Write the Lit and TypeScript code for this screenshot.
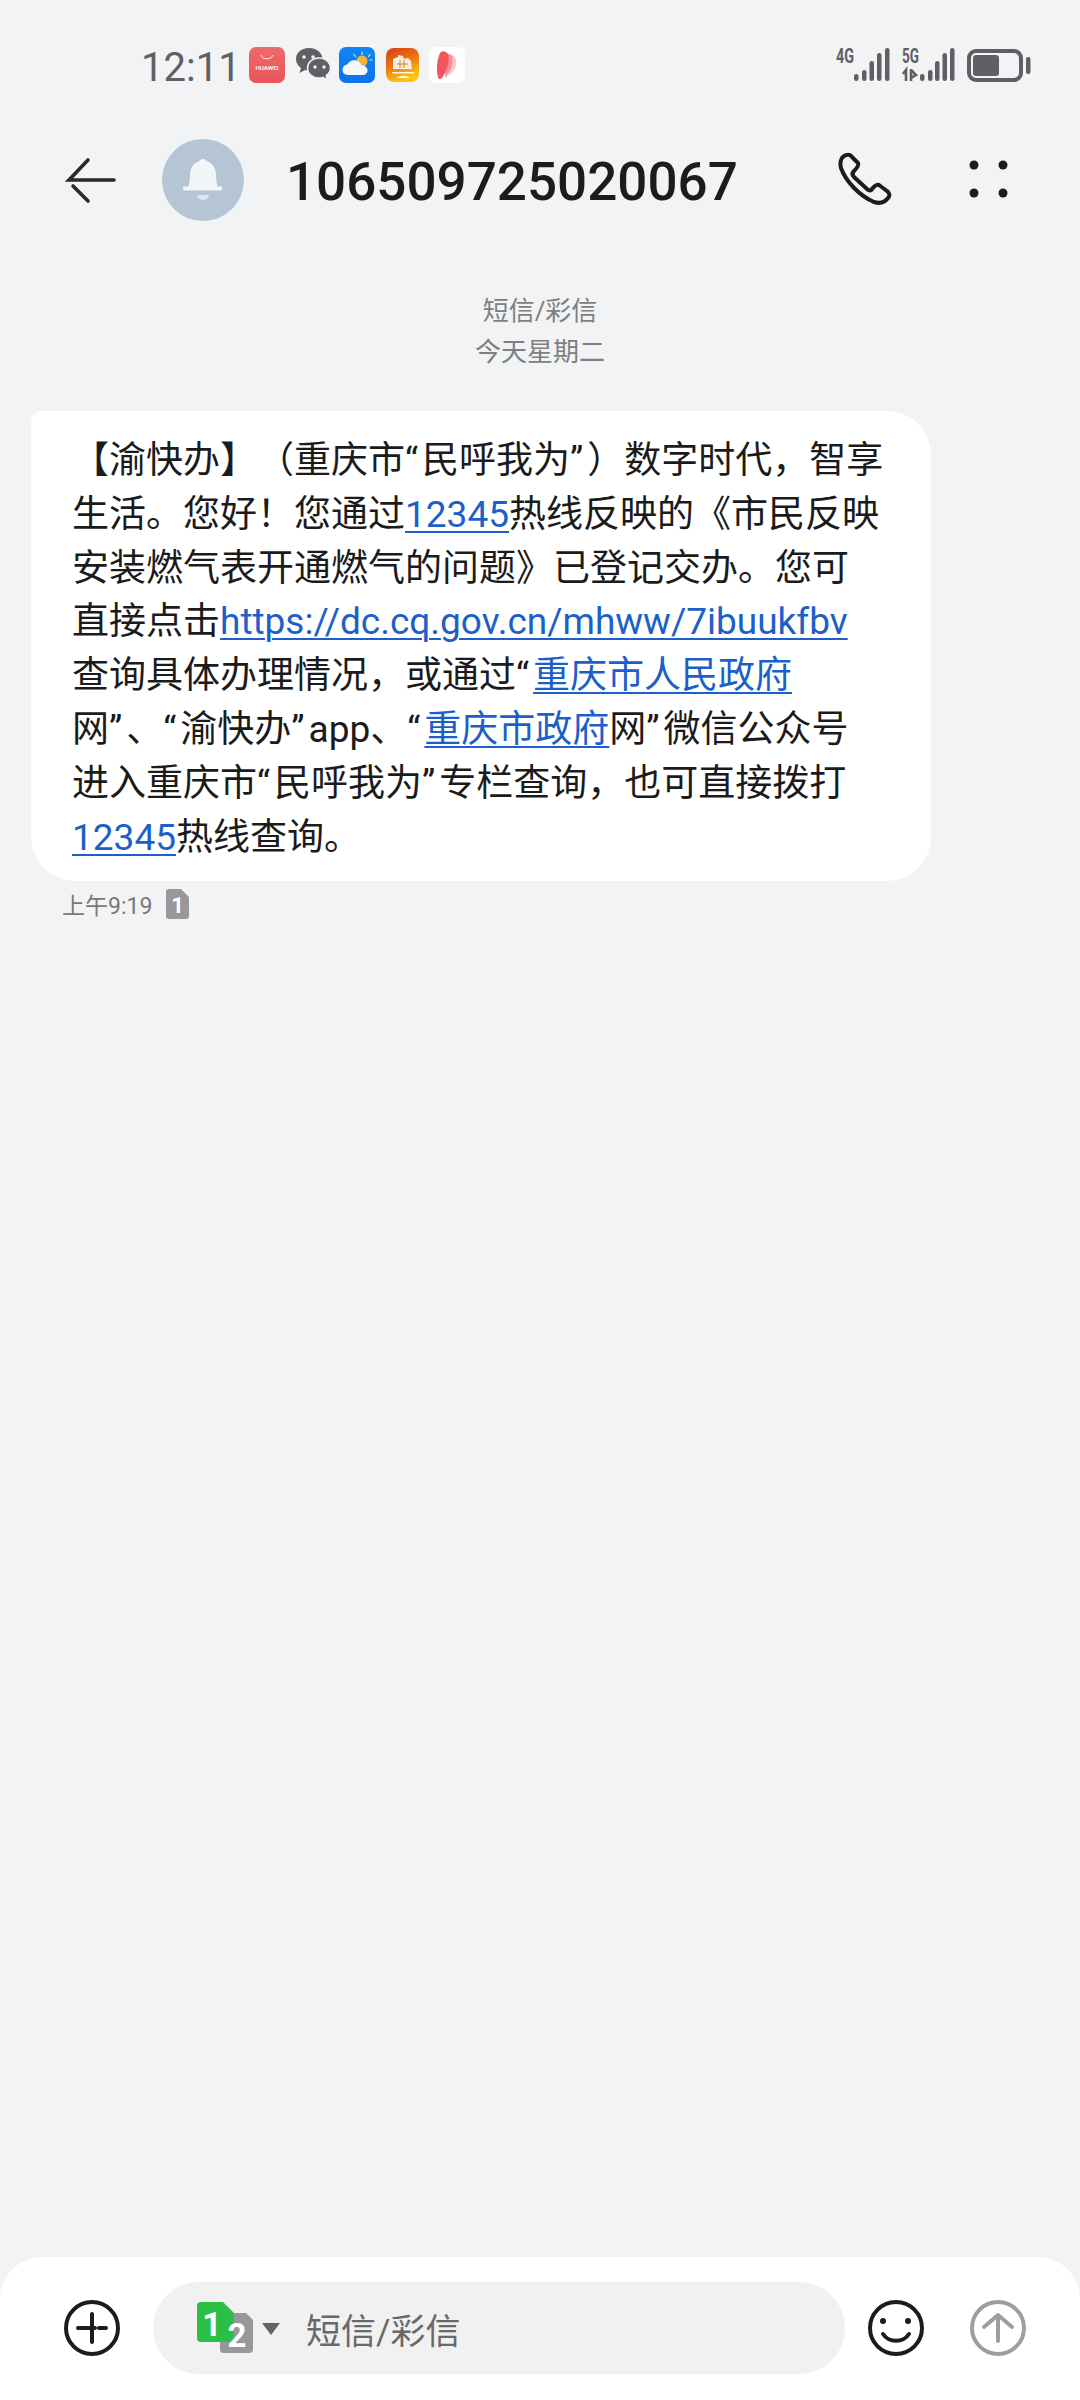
import { LitElement, css, html, svg } from "lit";
import { customElement } from "lit/decorators.js";

const bars = (xs: number[]) => {
  const tops = [74, 70, 61, 53, 48];
  return xs.map(
    (x, i) => svg`<rect x=${x} y=${tops[i]} width="4.5" height=${81 - tops[i]} rx="2.2" fill="#5f6063"></rect>`,
  );
};

@customElement("app-root")
export class AppRoot extends LitElement {
  static styles = css`
    :host {
      display: block;
      width: 1080px;
      height: 2400px;
      background: #f1f3f5;
      font-family: Roboto, "Noto Sans CJK SC", sans-serif;
      overflow: hidden;
    }
    svg {
      display: block;
      flex: none;
    }
    .page {
      height: 2400px;
      display: flex;
      flex-direction: column;
    }
    .status {
      height: 134px;
      display: flex;
      align-items: center;
      padding-left: 141px;
    }
    .time {
      width: 108px;
      font-size: 40px;
      color: #5f6063;
    }
    .apps {
      flex: none;
    }
    .signal {
      margin-left: 357px;
    }
    .header {
      height: 92px;
      display: flex;
      align-items: center;
      padding-left: 62px;
    }
    .avatar {
      margin-left: 40px;
    }
    .title {
      margin-left: 42px;
      width: 544px;
      padding-top: 4px;
      font-size: 53px;
      font-weight: 500;
      color: #1c1c1e;
      line-height: 88px;
    }
    .dots {
      margin-left: 61px;
    }
    .thread {
      flex: 1;
    }
    .notice {
      margin-top: 65px;
      text-align: center;
      font-size: 26px;
      line-height: 41px;
      color: #7d7f82;
    }
    .bubble {
      margin: 38px 0 0 31px;
      width: 900px;
      box-sizing: border-box;
      padding: 23px 0 17px 41px;
      background: #fff;
      border-radius: 10px 44px 44px 44px;
      font-size: 37px;
      line-height: 53.8px;
      color: #1b1b1b;
      white-space: nowrap;
      text-spacing-trim: space-all;
    }
    .bubble a {
      color: #1d5fc9;
      text-decoration: underline;
      text-decoration-thickness: 2px;
      text-underline-offset: 4px;
    }
    .q {
      letter-spacing: 4px;
    }
    .meta {
      margin: 8px 0 0 62px;
      display: flex;
      align-items: center;
      gap: 14px;
      height: 30px;
      font-size: 23px;
      color: #77797c;
    }
    .composer {
      height: 143px;
      box-sizing: border-box;
      padding-top: 25px;
      background: #fff;
      border-radius: 42px 42px 0 0;
      display: flex;
      align-items: flex-start;
    }
    .icon {
      margin-top: 16px;
    }
    .plus {
      margin-left: 62px;
    }
    .pill {
      margin-left: 31px;
      width: 692px;
      height: 92px;
      border-radius: 46px;
      background: #f1f1f1;
      display: flex;
      align-items: center;
      padding-left: 44px;
      box-sizing: border-box;
    }
    .placeholder {
      margin-left: 9px;
      font-size: 35px;
      color: #68696b;
    }
    .smile {
      margin-left: 21px;
    }
    .send {
      margin-left: 42px;
    }
  `;

  private statusIcons() {
    return html`<svg class="apps" width="230" height="40" viewBox="0 2 230 40">
      <defs>
        <linearGradient id="hw" x1="0" y1="0" x2="0" y2="1">
          <stop offset="0" stop-color="#ee6a6c"></stop>
          <stop offset="1" stop-color="#e9545a"></stop>
        </linearGradient>
        <linearGradient id="wx" x1="0" y1="0" x2="0" y2="1">
          <stop offset="0" stop-color="#0f86f5"></stop>
          <stop offset="1" stop-color="#0a73ea"></stop>
        </linearGradient>
        <linearGradient id="org" x1="0" y1="0" x2="0.4" y2="1">
          <stop offset="0" stop-color="#d63b1a"></stop>
          <stop offset="0.55" stop-color="#ec7a14"></stop>
          <stop offset="1" stop-color="#f8c80f"></stop>
        </linearGradient>
      </defs>
      <!-- huawei store -->
      <rect x="0" y="2" width="36" height="36" rx="7" fill="url(#hw)"></rect>
      <path d="M12 10c1 5 11 5 12 0" fill="none" stroke="#fff" stroke-width="1" opacity="0.85"></path>
      <text x="18" y="25" text-anchor="middle" font-family="Roboto" font-weight="700" font-size="6.2" fill="#fff" opacity="0.9">HUAWEI</text>
      <!-- wechat -->
      <path d="M60 3c-8 0-13 5-13 11 0 4 2 7 5 9l-1.500 5 5.500-3c1.500.4 3 .6 4.500.6 7 0 13-5 13-11.500S67 3 60 3z" fill="#5f6063"></path>
      <path d="M70 13c-7 0-11.500 4.500-11.500 10S63 33 70 33c1.300 0 2.500-.2 3.800-.6l4.700 2.800-1.200-4.500c2.500-1.900 4.200-4.600 4.200-7.700 0-5.500-5-10-10.500-10z" fill="#5f6063" stroke="#f1f3f5" stroke-width="1.500"></path>
      <circle cx="55" cy="12" r="1.800" fill="#f1f3f5"></circle>
      <circle cx="64" cy="12" r="1.800" fill="#f1f3f5"></circle>
      <circle cx="66" cy="22" r="1.700" fill="#f1f3f5"></circle>
      <circle cx="75" cy="22" r="1.700" fill="#f1f3f5"></circle>
      <!-- weather -->
      <rect x="90" y="2" width="36" height="36" rx="7" fill="url(#wx)"></rect>
      <circle cx="113" cy="16" r="5.500" fill="#f5b53a"></circle>
      <path d="M113 7v2.500M105 9.500l1.500 2M121 9.500l-1.500 2M123 15h-2" stroke="#e8eef6" stroke-width="1.200" stroke-linecap="round"></path>
      <path d="M99 30c-3.500 0-5.500-2.400-5.500-5.200 0-2.800 2-5 4.800-5.200 1.300-2.800 4-4.400 7-4.400 3.400 0 6.300 2.200 7.200 5.400 3.200-.2 6 2 6 4.800 0 2.800-2.300 4.600-5 4.600z" fill="#f3f8fd"></path>
      <!-- city app -->
      <rect x="137" y="3" width="33" height="34" rx="8" fill="url(#org)"></rect>
      <path d="M144 24v-10l5-2v-2l5 1 1 3 4-1 3 3 1 8zM143 27h22v1.500h-22zM147 33c4-3 10-3 14 0" fill="#fff" fill-opacity="0.88" stroke="none"></path>
      <path d="M151 15v8M155 15v8M148 19h11" stroke="#e8741c" stroke-width="1"></path>
      <!-- notes -->
      <rect x="180" y="2" width="36" height="36" rx="7" fill="#fff"></rect>
      <path d="M202 10l4 2c3 6 1 14-7 19z" fill="#fcc6c8"></path>
      <path d="M197 8l6 2c2 7-1 17-7 23z" fill="#f98f92"></path>
      <path d="M191 8c2-3 6-2 8 1 2 7-1 17-6 24-2 2-4 1-4-1-2-8-1-17 2-24z" fill="#f2555c"></path>
    </svg>`;
  }

  private signal() {
    return html`<svg class="signal" width="197" height="134" viewBox="836 0 197 134">
      <text x="836" y="63" font-family="Roboto" font-weight="700" font-size="20" fill="#5f6063" textLength="18" lengthAdjust="spacingAndGlyphs">4G</text>
      ${bars([854, 862, 869.500, 877, 885])}
      <text x="902" y="63" font-family="Roboto" font-weight="700" font-size="20" fill="#5f6063" textLength="17" lengthAdjust="spacingAndGlyphs">5G</text>
      <path d="M903 74l3-4v11M911 69v12M911 70l5 5-5 3" fill="none" stroke="#5f6063" stroke-width="2.600"></path>
      ${bars([920, 928, 935, 942.500, 950])}
      <rect x="969" y="51" width="52" height="29" rx="7" fill="none" stroke="#5f6063" stroke-width="4"></rect>
      <rect x="973" y="55" width="26" height="21" rx="3" fill="#5f6063"></rect>
      <rect x="1026" y="57" width="4.500" height="17" rx="2" fill="#5f6063"></rect>
    </svg>`;
  }

  render() {
    return html`<div class="page">
      <div class="status">
        <div class="time">12:11</div>
        ${this.statusIcons()} ${this.signal()}
      </div>

      <div class="header">
        <svg width="60" height="60" viewBox="62 150 60 60" fill="none" stroke="#2a2a2c" stroke-width="3.600" stroke-linecap="round">
          <path d="M88 160L69 180H114M73 186l15 15"></path>
        </svg>
        <svg class="avatar" width="82" height="82" viewBox="0 0 82 82">
          <circle cx="41" cy="41" r="41" fill="#b5c5d5"></circle>
          <path d="M41 20c1.500 0 3 1 3.500 2 6 2 9.500 7.500 9.500 14 0 6 .8 10 2 13H26c1.200-3 2-7 2-13 0-6.500 3.500-12 9.500-14 .5-1 2-2 3.500-2z" fill="#f3f6f9"></path>
          <rect x="21" y="47.500" width="39" height="4" rx="1" fill="#f3f6f9"></rect>
          <path d="M35 56h12c-.5 3-3 5-6 5s-5.500-2-6-5z" fill="#dfe6ee"></path>
        </svg>
        <div class="title">106509725020067</div>
        <svg width="70" height="70" viewBox="30 15 70 70" fill="none" stroke="#1c1c1e" stroke-width="4" stroke-linejoin="round">
          <path d="M42 28C45 24 50 24 52 27L58 33C59 35 57 38 54 41C52 43 52 45 54 47L67 59C69 61 71 61 72 59C74 57 76 54 79 55L87 61C90 63 90 66 88 68C85 72 80 74 74 72C60 66 46 52 41 38C40 34 40 31 42 28Z"></path>
        </svg>
        <svg class="dots" width="55" height="50" viewBox="0 0 55 50" fill="#1c1c1e">
          <circle cx="13" cy="10" r="4.500"></circle>
          <circle cx="42" cy="10" r="4.500"></circle>
          <circle cx="13" cy="38" r="4.500"></circle>
          <circle cx="42" cy="38" r="4.500"></circle>
        </svg>
      </div>

      <div class="thread">
        <div class="notice">短信/彩信<br />今天星期二</div>
        <div class="bubble">
          【渝快办】（重庆市<span class="q">“</span>民呼我为<span class="q">”</span>）数字时代，智享<br />
          生活。您好！您通过<a>12345</a>热线反映的《市民反映<br />
          安装燃气表开通燃气的问题》已登记交办。您可<br />
          直接点击<a>https://dc.cq.gov.cn/mhww/7ibuukfbv</a><br />
          查询具体办理情况，或通过<span class="q">“</span><a>重庆市人民政府</a><br />
          网<span class="q">”</span>、<span class="q">“</span>渝快办<span class="q">”</span>app、<span class="q">“</span><a>重庆市政府</a>网<span class="q">”</span>微信公众号<br />
          进入重庆市<span class="q">“</span>民呼我为<span class="q">”</span>专栏查询，也可直接拨打<br />
          <a>12345</a>热线查询。
        </div>
        <div class="meta">
          <span>上午9:19</span>
          <svg width="24" height="30" viewBox="0 0 24 30">
            <path d="M3 0h12l8 8v19a3 3 0 0 1-3 3H3a3 3 0 0 1-3-3V3a3 3 0 0 1 3-3z" fill="#96989a"></path>
            <text x="11.500" y="24" text-anchor="middle" font-family="Roboto" font-weight="700" font-size="22" fill="#fff">1</text>
          </svg>
        </div>
      </div>

      <div class="composer">
        <svg class="icon plus" width="60" height="60" viewBox="0 0 60 60" fill="none" stroke="#1c1c1e" stroke-width="4" stroke-linecap="round">
          <circle cx="30" cy="30" r="26"></circle>
          <path d="M30 16v28M16 30h17M37 30h7"></path>
        </svg>
        <div class="pill">
          <svg width="100" height="54" viewBox="0 0 100 54">
            <path d="M23 12h26l7 7v29a4 4 0 0 1-4 4H27a4 4 0 0 1-4-4z" fill="#96989a"></path>
            <path d="M4 1h22l11 11v25a4 4 0 0 1-4 4H4a4 4 0 0 1-4-4V5a4 4 0 0 1 4-4z" fill="#2dbf45"></path>
            <text x="15" y="35" text-anchor="middle" font-family="Roboto" font-weight="700" font-size="34" fill="#fff">1</text>
            <text x="40" y="46" text-anchor="middle" font-family="Roboto" font-weight="700" font-size="33" fill="#fff">2</text>
            <path d="M65 22h18l-9 12z" fill="#636466"></path>
          </svg>
          <span class="placeholder">短信/彩信</span>
        </div>
        <svg class="icon smile" width="60" height="60" viewBox="0 0 60 60" fill="none" stroke="#1c1c1e" stroke-width="4" stroke-linecap="round">
          <circle cx="30" cy="30" r="26"></circle>
          <circle cx="17" cy="23" r="3" fill="#1c1c1e" stroke="none"></circle>
          <circle cx="42" cy="23" r="3" fill="#1c1c1e" stroke="none"></circle>
          <path d="M17 36c6 9 20 9 26 0"></path>
        </svg>
        <svg class="icon send" width="60" height="60" viewBox="0 0 60 60" fill="none" stroke="#9e9e9e" stroke-width="4" stroke-linecap="round" stroke-linejoin="round">
          <circle cx="30" cy="30" r="26"></circle>
          <path d="M30 43V17M16 29l14-12 14 12"></path>
        </svg>
      </div>
    </div>`;
  }
}
